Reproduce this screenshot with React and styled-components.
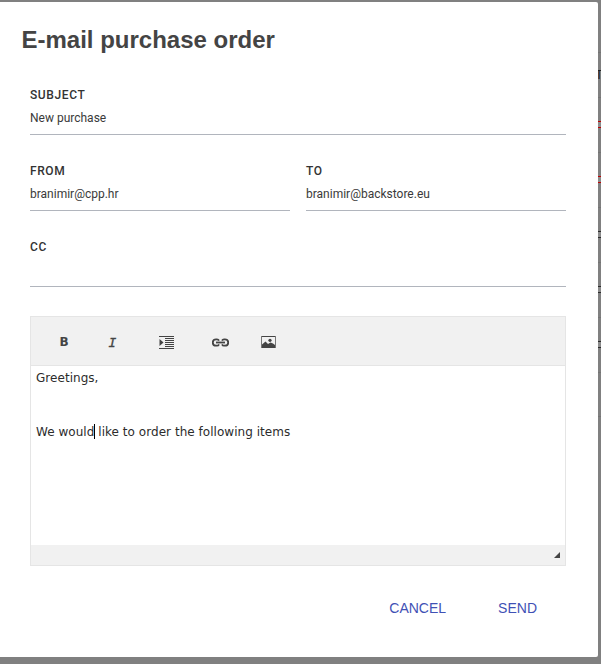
import React, {useState} from 'react'
import styled, {createGlobalStyle} from 'styled-components'

const rows = [
    {height: 55, tone: '#c00000'},
    {height: 55, tone: '#c00000'},
    {height: 55, tone: '#2b2b2b'},
    {height: 55, tone: '#2b2b2b'},
    {height: 55, tone: '#2b2b2b'},
]

const IndentIcon = () => (
    <svg width="15" height="13" viewBox="0 0 15 13" fill="#444" shapeRendering="crispEdges">
        <path d="M0 0h15v1H0zM6 2h9v1H6zM6 4h9v1H6zM6 6h9v1H6zM6 8h9v1H6zM6 10h9v1H6zM0 12h15v1H0z" />
        <path d="M0.5 3v7l4-3.5z" shapeRendering="auto" />
    </svg>
)

const LinkIcon = () => (
    <svg width="17" height="9" viewBox="0 0 17 9" fill="none" stroke="#444" strokeWidth="1.8">
        <path d="M7 2.7Q6.4 1.3 5 1.3H4A3.1 3.1 0 0 0 4 7.7H5Q6.4 7.7 7 6.3" />
        <path d="M10 2.7Q10.6 1.3 12 1.3H13A3.1 3.1 0 0 1 13 7.7H12Q10.6 7.7 10 6.3" />
        <path d="M4 4.5h9" />
    </svg>
)

const ImageIcon = () => (
    <svg width="15" height="12" viewBox="0 0 15 12">
        <path d="M1 0.5h13M1 11.5h13" stroke="#444" />
        <path d="M0.5 0v12M14.5 0v12" stroke="#777" />
        <path d="M1 11V8.5l3.5-3L7 8l2.5-1.5L12 7.5l2 1.5V11z" fill="#444" />
        <circle cx="9" cy="4.3" r="1.6" fill="#444" />
    </svg>
)

const Field = ({label, value}) => {
    const [text, setText] = useState(value)
    return (
        <FieldBox>
            <Label>{label}</Label>
            <Input value={text} onChange={e => setText(e.target.value)} />
        </FieldBox>
    )
}

const App = () => {
    return (
        <Screen>
            <GlobalStyle />
            <Modal>
                <Title>E-mail purchase order</Title>
                <Form>
                    <Field label="SUBJECT" value="New purchase" />
                    <Columns>
                        <Field label="FROM" value="branimir@cpp.hr" />
                        <Field label="TO" value="branimir@backstore.eu" />
                    </Columns>
                    <Field label="CC" value="" />
                </Form>
                <Editor>
                    <Toolbar>
                        <Tool width="44px"><BoldMark>B</BoldMark></Tool>
                        <Tool width="53px"><ItalicMark>I</ItalicMark></Tool>
                        <Tool width="54px"><IndentIcon /></Tool>
                        <Tool width="54px"><LinkIcon /></Tool>
                        <Tool width="42px"><ImageIcon /></Tool>
                    </Toolbar>
                    <Message>
                        <Line>Greetings,</Line>
                        <Line />
                        <Line>We would<Caret /> like to order the following items</Line>
                    </Message>
                    <StatusBar>
                        <svg width="6" height="6" viewBox="0 0 6 6"><path d="M6 0v6H0z" fill="#444" /></svg>
                    </StatusBar>
                </Editor>
                <Actions>
                    <Action>CANCEL</Action>
                    <Action>SEND</Action>
                </Actions>
            </Modal>
            <Backdrop>
                <Row height={53} />
                <Row height={45}><Heading>T</Heading></Row>
                {rows.map((row, i) => (
                    <Row key={i} height={row.height}><Check $tone={row.tone} /></Row>
                ))}
                <Row height={44} />
            </Backdrop>
        </Screen>
    )
}

const GlobalStyle = createGlobalStyle`
    * {
        box-sizing: border-box;
    }
    body {
        margin: 0;
        overflow: hidden;
        background: #808080;
        font-family: "Liberation Sans", Arial, sans-serif;
    }
`;
const Screen = styled.div`
    display: flex;
    width: 601px;
    height: 664px;
    background: #808080;
`;
const Modal = styled.div`
    flex: none;
    width: 598px;
    height: 655px;
    margin-top: 2px;
    padding: 22px 32px 0 22px;
    background: white;
    border-radius: 0 2px 2px 0;
`;
const Title = styled.h2`
    margin: 0 0 0 -0.5px;
    font-size: 24px;
    line-height: 32px;
    color: #444;
`;
const Form = styled.div`
    padding: 29px 0 0 8px;
`;
const Columns = styled.div`
    display: grid;
    grid-template-columns: 1fr 1fr;
    gap: 16px;
`;
const FieldBox = styled.label`
    display: block;
    height: 76px;
`;
const Label = styled.div`
    height: 20px;
    font: 500 12px/20px Roboto, sans-serif;
    letter-spacing: 0.6px;
    color: #333;
`;
const Input = styled.input`
    display: block;
    width: 100%;
    height: 30px;
    padding: 0 0 4px;
    border: none;
    border-bottom: 1px solid #b1b5bd;
    outline: none;
    background: transparent;
    font: 12px Roboto, sans-serif;
    color: #3a3a3a;
`;
const Editor = styled.div`
    width: 536px;
    height: 250px;
    margin: 3px 0 0 8px;
    border: 1px solid #e5e5e5;
`;
const Toolbar = styled.div`
    display: flex;
    height: 49px;
    padding-left: 11px;
    background: #f1f1f1;
    border-bottom: 1px solid #e5e5e5;
`;
const Tool = styled.button`
    display: flex;
    justify-content: center;
    align-items: center;
    width: ${({width}) => width};
    padding: 2px 0 0;
    border: none;
    background: none;
    color: #444;
`;
const BoldMark = styled.b`
    font: bold 12px "DejaVu Sans", sans-serif;
`;
const ItalicMark = styled.i`
    font: italic 13px "DejaVu Sans Mono", monospace;
    -webkit-text-stroke: 0.3px #444;
`;
const Message = styled.div`
    height: 179px;
    padding: 3px 5px;
    font: 12px/18px "DejaVu Sans", Verdana, sans-serif;
    letter-spacing: 0.04px;
    color: #2c2c2c;
`;
const Line = styled.div`
    height: 18px;
    margin-bottom: 9px;
    white-space: nowrap;
`;
const Caret = styled.span`
    display: inline-block;
    width: 1px;
    height: 15px;
    margin-right: -1px;
    vertical-align: -3px;
    background: black;
`;
const StatusBar = styled.div`
    display: flex;
    justify-content: flex-end;
    height: 20px;
    padding: 7px 5px 0 0;
    background: #f1f1f1;
`;
const Actions = styled.div`
    display: flex;
    justify-content: flex-end;
    gap: 52px;
    padding: 32px 29px 0 0;
`;
const Action = styled.button`
    padding: 0;
    border: none;
    background: none;
    font: 14px/20px "Liberation Sans", Arial, sans-serif;
    color: #3f51b5;
    cursor: pointer;
`;
const Backdrop = styled.div`
    width: 3px;
    overflow: hidden;
`;
const Row = styled.div`
    display: flex;
    align-items: center;
    height: ${({height}) => height}px;
    border-bottom: 1px solid #747474;
`;
const Heading = styled.span`
    margin: 0 0 1px -3px;
    font-size: 13px;
    line-height: 13px;
    color: #222;
`;
const Check = styled.span`
    flex: none;
    width: 10px;
    height: 7px;
    margin-bottom: 1px;
    border: solid ${({$tone}) => $tone};
    border-width: 1px 0;
    background: #8c8c8c;
`;

export default App
